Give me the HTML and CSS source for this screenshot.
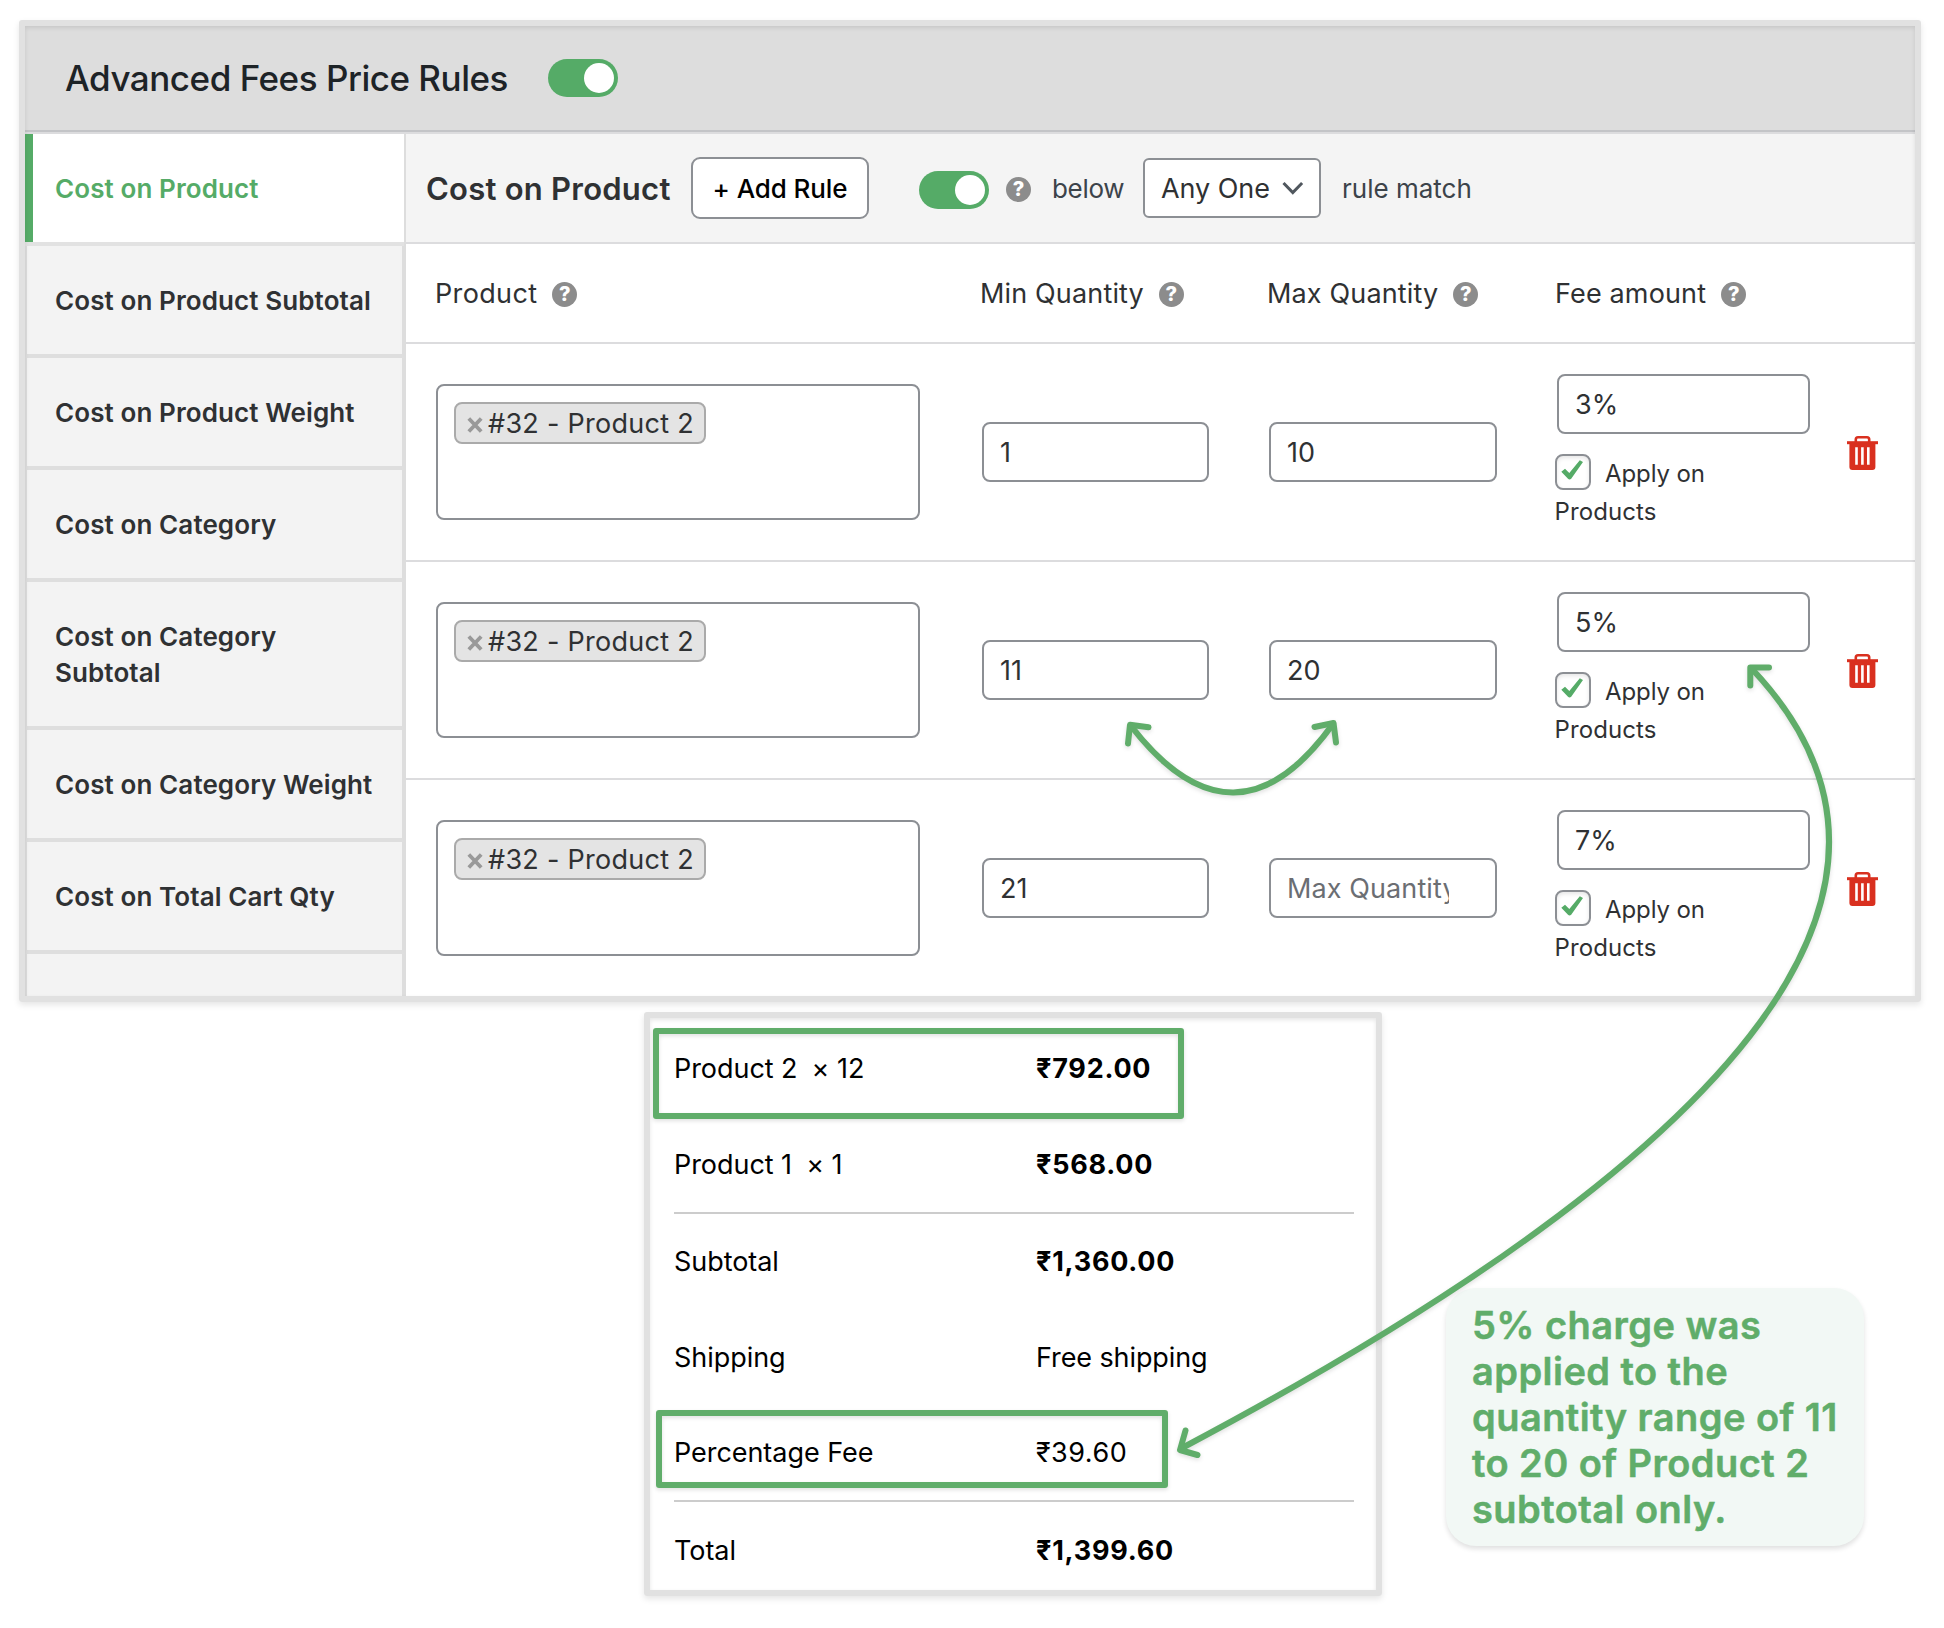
FILE: index.html
```html
<!DOCTYPE html>
<html lang="en">
<head>
<meta charset="utf-8">
<title>Advanced Fees Price Rules</title>
<link rel="stylesheet" href="styles.css">
</head>
<body>
<svg class="symbols" aria-hidden="true">
  <symbol id="trash" viewBox="0 0 32 36">
    <path d="M8.800 7V4.400a2.200 2.200 0 0 1 2.200-2.200h9a2.200 2.200 0 0 1 2.200 2.200V7" fill="none" stroke="#d9301f" stroke-width="2.600"/>
    <path d="M0 6.200h31v3H0z" fill="#d9301f"/>
    <path fill-rule="evenodd" fill="#d9301f" d="M2.400 8.500h26v23.500a3 3 0 0 1-3 3h-20a3 3 0 0 1-3-3zM8.200 12.300v17.400h2.600V12.300zM14.100 12.300v17.400h2.600V12.300zM20 12.300v17.400h2.600V12.300z"/>
  </symbol>
  <symbol id="tick" viewBox="0 0 32 32">
    <path fill="#55ab67" d="M4.300 15.800 L8 12.800 L12.300 17 L22.800 4.300 L26 6 L14.200 22.800 Q12.500 24.200 11 22.800 Z"/>
  </symbol>
  <symbol id="cross" viewBox="0 0 16 16">
    <path d="M1.800 1.500l12.400 13M14.200 1.500l-12.400 13" stroke="#999" stroke-width="3.800" fill="none"/>
  </symbol>
</svg>

<main class="board">
  <section class="panel">
    <header class="panel-head">
      <h1>Advanced Fees Price Rules</h1>
      <span class="toggle"></span>
    </header>
    <div class="panel-body">
      <nav class="tabs">
        <a class="tab active">Cost on Product</a>
        <a class="tab">Cost on Product Subtotal</a>
        <a class="tab">Cost on Product Weight</a>
        <a class="tab">Cost on Category</a>
        <a class="tab">Cost on Category Subtotal</a>
        <a class="tab">Cost on Category Weight</a>
        <a class="tab">Cost on Total Cart Qty</a>
        <a class="tab"></a>
      </nav>
      <div class="rules">
        <div class="toolbar">
          <h2>Cost on Product</h2>
          <button class="add-rule">+ Add Rule</button>
          <span class="toggle"></span>
          <span class="help">?</span>
          <span class="below">below</span>
          <span class="select">Any One
            <svg width="22" height="14" viewBox="0 0 22 14"><path d="M1.500 2l9.300 9.500L20.100 2" fill="none" stroke="#50575e" stroke-width="3"/></svg>
          </span>
          <span class="match">rule match</span>
        </div>
        <div class="grid-row columns">
          <div class="col-product">Product<span class="help">?</span></div>
          <div>Min Quantity<span class="help">?</span></div>
          <div>Max Quantity<span class="help">?</span></div>
          <div>Fee amount<span class="help">?</span></div>
        </div>
        <div class="grid-row rule">
          <div class="multi"><span class="chip"><svg width="16" height="16"><use href="#cross"/></svg>#32 - Product 2</span></div>
          <div class="field qty">1</div>
          <div class="field qty">10</div>
          <div class="fee">
            <div class="field">3%</div>
            <div class="apply"><span class="apply-line"><span class="box"><svg width="32" height="32"><use href="#tick"/></svg></span>Apply on</span><span>Products</span></div>
          </div>
          <svg class="trash" width="32" height="36"><use href="#trash"/></svg>
        </div>
        <div class="grid-row rule">
          <div class="multi"><span class="chip"><svg width="16" height="16"><use href="#cross"/></svg>#32 - Product 2</span></div>
          <div class="field qty">11</div>
          <div class="field qty">20</div>
          <div class="fee">
            <div class="field">5%</div>
            <div class="apply"><span class="apply-line"><span class="box"><svg width="32" height="32"><use href="#tick"/></svg></span>Apply on</span><span>Products</span></div>
          </div>
          <svg class="trash" width="32" height="36"><use href="#trash"/></svg>
        </div>
        <div class="grid-row rule">
          <div class="multi"><span class="chip"><svg width="16" height="16"><use href="#cross"/></svg>#32 - Product 2</span></div>
          <div class="field qty">21</div>
          <div class="field qty placeholder"><span>Max Quantity</span></div>
          <div class="fee">
            <div class="field">7%</div>
            <div class="apply"><span class="apply-line"><span class="box"><svg width="32" height="32"><use href="#tick"/></svg></span>Apply on</span><span>Products</span></div>
          </div>
          <svg class="trash" width="32" height="36"><use href="#trash"/></svg>
        </div>
      </div>
    </div>
  </section>

  <section class="receipt">
    <div class="line"><span>Product 2&nbsp; <span class="times">×</span>&nbsp;12</span><b>₹792.00</b></div>
    <div class="line"><span>Product 1&nbsp; <span class="times">×</span>&nbsp;1</span><b>₹568.00</b></div>
    <hr>
    <div class="line"><span>Subtotal</span><b>₹1,360.00</b></div>
    <div class="line"><span>Shipping</span><span class="method">Free shipping</span></div>
    <div class="line"><span>Percentage Fee</span><span class="amount">₹39.60</span></div>
    <hr>
    <div class="line"><span>Total</span><b>₹1,399.60</b></div>
  </section>

  <div class="mark mark-product"></div>
  <div class="mark mark-fee"></div>
  <p class="callout">5% charge was applied to the quantity range of 11 to 20 of Product 2 subtotal only.</p>

  <svg class="arrows" width="1944" height="1628" viewBox="0 0 1944 1628">
    <g fill="none" stroke="#60ad6a" stroke-width="6" stroke-linecap="round" stroke-linejoin="round">
      <path d="M1131 726Q1235 860 1333 724"/>
      <path d="M1148.500 727.300L1130 724.800L1128 743.500"/>
      <path d="M1314.500 727L1333.500 723L1336 742.500"/>
      <path d="M1751.500 668.500Q2053 987 1182 1448"/>
      <path d="M1769 667.500H1750.300V685.500"/>
      <path d="M1185.500 1430.500L1180 1450L1197.500 1455"/>
    </g>
  </svg>
</main>
</body>
</html>
```
FILE: styles.css
```css
* { box-sizing: border-box; }

body {
  margin: 0;
  background: #fff;
  color: #2f3133;
  font-family: Inter, "Liberation Sans", sans-serif;
  font-size: 27px;
}

h1, h2, p { margin: 0; }

.symbols { position: absolute; width: 0; height: 0; }

.board {
  position: relative;
  width: 1944px;
  height: 1628px;
  overflow: hidden;
  padding-top: 20px;
}

/* rules panel */
.panel {
  position: relative;
  width: 1902px;
  height: 982px;
  margin-left: 19px;
  border: 6px solid #e1e1e1;
  border-radius: 3px;
  box-shadow: 0 3px 6px rgba(0, 0, 0, .1);
  overflow: hidden;
}

.panel::after {
  content: "";
  position: absolute;
  inset: 0;
  box-shadow: inset 0 2px 4px rgba(0, 0, 0, .1);
  pointer-events: none;
}

.panel-head {
  display: flex;
  align-items: center;
  gap: 40px;
  height: 106px;
  padding-left: 40px;
  background: #ddd;
  border-bottom: 2px solid #c3c4c7;
}

.panel-head h1 {
  color: #1d2327;
  font-size: 35px;
  font-weight: 500;
  letter-spacing: -.48px;
}

.toggle {
  display: flex;
  justify-content: flex-end;
  flex: none;
  width: 70px;
  height: 38px;
  padding: 4px;
  border-radius: 19px;
  background: #55ab67;
}

.toggle::before {
  content: "";
  width: 30px;
  height: 30px;
  border-radius: 50%;
  background: #fff;
}

.panel-body {
  display: flex;
  height: 864px;
  border-top: 2px solid #dcdcde;
}

.tabs {
  flex: none;
  display: flex;
  flex-direction: column;
  width: 381px;
  border-right: 2px solid #ddd;
  background: #f3f3f3;
}

.tab {
  flex: none;
  height: 112px;
  padding: 37px 20px 0 28px;
  border-left: 2px solid #ddd;
  border-right: 2px solid #ddd;
  border-bottom: 4px solid #dedede;
  font-size: 26px;
  font-weight: 600;
  line-height: 36px;
  letter-spacing: .1px;
}

.tab:nth-child(5) { height: 148px; }

.tab.active {
  padding-left: 30px;
  border-left: 0;
  border-right: 0;
  border-bottom-color: #e2e2e2;
  background: #fff;
  box-shadow: inset 8px 0 #55ab67;
  color: #55ab67;
}

.rules { flex: 1; }

.toolbar {
  display: flex;
  align-items: center;
  height: 110px;
  padding-left: 20px;
  background: #f4f4f4;
  border-bottom: 2px solid #dcdcde;
}

.toolbar h2 {
  width: 265px;
  font-size: 31px;
  font-weight: 600;
  letter-spacing: .24px;
}

.add-rule {
  width: 178px;
  height: 62px;
  margin-right: 50px;
  padding: 0;
  border: 2px solid #8c8f94;
  border-radius: 9px;
  background: #fff;
  color: #000;
  font: 500 26px Inter, sans-serif;
  letter-spacing: -.1px;
}

.toolbar .toggle { margin-top: 4px; }

.help {
  display: inline-flex;
  align-items: center;
  justify-content: center;
  flex: none;
  width: 25px;
  height: 25px;
  border-radius: 50%;
  background: #8c8c8c;
  color: #fff;
  font-size: 20px;
  font-weight: 800;
  line-height: 25px;
}

.toolbar .help { margin: 2px 21px 0 17px; }

.below {
  width: 91px;
  color: #3c434a;
  font-size: 26px;
  letter-spacing: -.3px;
}

.select {
  display: flex;
  align-items: center;
  justify-content: space-between;
  width: 178px;
  height: 60px;
  padding: 0 15px 0 16px;
  border: 2px solid #8c8f94;
  border-radius: 6px;
  background: #fff;
  letter-spacing: -.05px;
}

.match {
  margin-left: 21px;
  color: #3c434a;
  font-size: 26px;
}

.grid-row {
  display: grid;
  grid-template-columns: 546px 287px 288px 290px auto;
  padding-left: 30px;
  border-bottom: 2px solid #dcdcde;
}

.columns {
  align-items: center;
  height: 100px;
  padding-left: 28px;
  letter-spacing: .15px;
}

.columns div { display: flex; align-items: center; }
.columns .col-product { padding-left: 1px; letter-spacing: .35px; }
.columns .help { margin: 2px 0 0 15px; letter-spacing: 0; }

.rule { height: 218px; }
.rule:last-child { height: 216px; border-bottom: 0; }

.multi {
  width: 484px;
  height: 136px;
  margin-top: 40px;
  padding: 16px;
  border: 2px solid #8c8f94;
  border-radius: 8px;
}

.chip {
  display: flex;
  align-items: center;
  gap: 5px;
  width: 252px;
  height: 42px;
  padding-left: 11px;
  border: 2px solid #aaa;
  border-radius: 8px;
  background: #e4e4e4;
  letter-spacing: .28px;
  white-space: nowrap;
}

.chip svg { flex: none; margin-top: 3px; }

.field {
  display: flex;
  align-items: center;
  width: 253px;
  height: 60px;
  padding-left: 16px;
  border: 2px solid #8c8f94;
  border-radius: 8px;
}

.qty { width: 227px; margin-top: 78px; }
.qty + .qty { width: 228px; }

.placeholder { color: #6b6e73; }

.placeholder span {
  width: 162px;
  overflow: hidden;
  letter-spacing: .1px;
  white-space: nowrap;
}

.fee { padding-top: 30px; }

.apply {
  display: flex;
  flex-direction: column;
  margin: 21px 0 0 -3px;
  font-size: 24px;
  line-height: 38px;
}

.apply-line { display: flex; gap: 14px; letter-spacing: -.1px; }
.apply-line + span { padding-left: .5px; letter-spacing: .1px; }

.box {
  width: 36px;
  height: 36px;
  margin: -1px 0 0 1px;
  border: 2px solid #8c8f94;
  border-radius: 8px;
  box-shadow: inset 0 2px 4px rgba(0, 0, 0, .1);
}

.box svg { display: block; }

.trash { margin-top: 91px; }

/* order totals */
.receipt {
  width: 738px;
  height: 584px;
  margin: 10px 0 0 644px;
  padding: 3px 22px 0 24px;
  overflow: hidden;
  border: 6px solid #e1e1e1;
  border-radius: 3px;
  box-shadow: 0 3px 6px rgba(0, 0, 0, .1), inset 0 2px 4px rgba(0, 0, 0, .1);
  color: #000;
}

.line {
  display: grid;
  grid-template-columns: 362px auto;
  align-items: center;
  height: 95.5px;
  letter-spacing: -.05px;
}

.line b { font-weight: 700; letter-spacing: .75px; }
.times { margin-left: -1px; }
.method { letter-spacing: -.1px; }
.amount { letter-spacing: .5px; }

.receipt hr {
  height: 2px;
  margin: 0;
  border: 0;
  background: #ccc;
}

.receipt hr ~ hr { position: relative; top: -1px; }

/* annotations laid over the screens */
.mark {
  position: absolute;
  border: 6px solid #60ad6a;
  border-radius: 3px;
  box-shadow: 0 2px 4px rgba(0, 0, 0, .12), inset 0 2px 4px rgba(0, 0, 0, .12);
}

.mark-product { left: 653px; top: 1028px; width: 531px; height: 91px; }
.mark-fee { left: 656px; top: 1410px; width: 512px; height: 78px; }

.callout {
  position: absolute;
  left: 1446px;
  top: 1288px;
  width: 418px;
  height: 258px;
  padding: 14px 14px 0 26px;
  border-radius: 30px;
  background: #f2f8f5;
  box-shadow: 0 3px 5px rgba(0, 0, 0, .12);
  color: #60ad6a;
  font-size: 38px;
  font-weight: 600;
  line-height: 46px;
  letter-spacing: .45px;
  -webkit-text-stroke: .5px #60ad6a;
}

.arrows {
  position: absolute;
  left: 0;
  top: 0;
  filter: drop-shadow(0 2px 2px rgba(0, 0, 0, .12));
}
```
